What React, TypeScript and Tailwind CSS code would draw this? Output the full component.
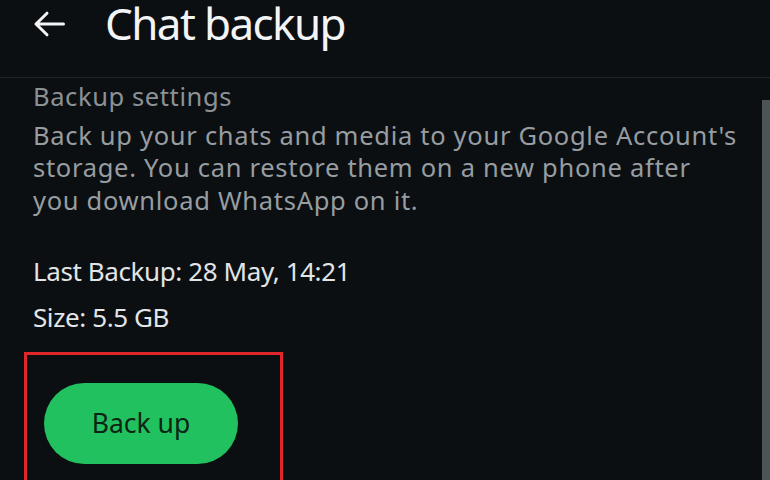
import React from "react";

function BackArrow() {
  return (
    <svg width="32" height="26" viewBox="0 0 32 26" fill="none" className="shrink-0">
      <path d="M30.5 13H3M14 2.2L3 13l11 10.8" stroke="#f2f4f5" strokeWidth="3" strokeLinecap="round" strokeLinejoin="round" />
    </svg>
  );
}

export default function App() {
  return (
    <div
      className="relative w-[770px] h-[480px] overflow-hidden bg-[#0b0f12]"
      style={{ fontFamily: '"Noto Sans", "Open Sans", sans-serif' }}
    >
      <header className="h-[78px] border-b border-[#1f2427] flex items-start pt-[1px]">
        <div className="ml-[33px] mt-[10px]">
          <BackArrow />
        </div>
        <h1 className="ml-[40px] text-[44px] leading-[44px] tracking-[-1.6px] text-[#f2f4f5] font-normal">Chat backup</h1>
      </header>

      <main className="pl-[33px] pr-[20px] pt-[2px]">
        <p className="text-[25.5px] leading-[32.5px] tracking-[0.6px] text-[#8b9296]">Backup settings</p>
        <p className="mt-[6px] text-[25.5px] leading-[32.5px] tracking-[0.7px] text-[#979da1] whitespace-nowrap">
          Back up your chats and media to your Google Account's
          <br />
          storage. You can restore them on a new phone after
          <br />
          you download WhatsApp on it.
        </p>

        <div className="mt-[32px] text-[26px] leading-[46px] tracking-[-0.4px] text-[#e2e5e7]">
          <p>Last Backup: 28 May, 14:21</p>
          <p>Size: 5.5 GB</p>
        </div>

        <div className="-ml-[9px] mt-[12px] w-[259px] h-[160px] border-[3px] border-[#e0262b] pl-[17px] pt-[28px]">
          <button className="w-[194px] h-[81px] rounded-full bg-[#22c15f] text-[26.5px] text-[#0c2414]">
            Back up
          </button>
        </div>
      </main>

      <div className="absolute right-0 top-[100px] bottom-0 w-[8px] bg-[#4d5455]" />
    </div>
  );
}
